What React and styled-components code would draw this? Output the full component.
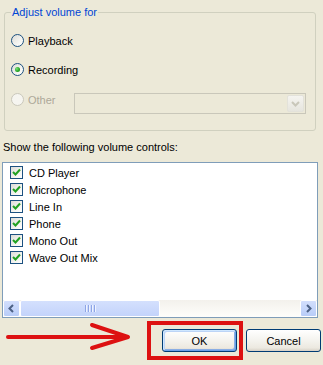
import React from "react";
import styled, { createGlobalStyle } from "styled-components";

const GlobalStyle = createGlobalStyle`
  html, body {
    margin: 0;
    padding: 0;
    background: #ece9d8;
  }
  body {
    font-family: "Liberation Sans", Arial, sans-serif;
    font-size: 11px;
  }
`;

const Dialog = styled.div`
  width: 323px;
  height: 365px;
  box-sizing: border-box;
  overflow: hidden;
  background: #ece9d8;
  color: #000;
  padding-top: 6px;
  display: flex;
  flex-direction: column;
`;

const Group = styled.fieldset`
  margin: 0 7px 0 4px;
  padding: 0 0 20px 6px;
  border: 1px solid #d0d0bf;
  border-radius: 3px;
  min-width: 0;
`;

const Legend = styled.legend`
  color: #0046d5;
  padding: 0 1px;
  line-height: 13px;
`;

const RadioList = styled.div`
  display: flex;
  flex-direction: column;
  gap: 8px;
  margin-top: 11px;
`;

const RadioRow = styled.div`
  display: flex;
  align-items: center;
  height: 21px;
  gap: 4px;
  margin-top: ${(p) => (p.$shift ? p.$shift : 0)}px;
  color: ${(p) => (p.$disabled ? "#aca899" : "#000")};
`;

const RadioDot = styled.span`
  width: 13px;
  height: 13px;
  box-sizing: border-box;
  border-radius: 50%;
  flex: none;
  display: flex;
  align-items: center;
  justify-content: center;
  border: 1px solid ${(p) => (p.$disabled ? "#cac8bb" : "#1c5180")};
  background: ${(p) =>
    p.$disabled
      ? "#f6f5f0"
      : "linear-gradient(135deg, #dcdcd7 0%, #f4f4f0 60%, #ffffff 100%)"};

  &::after {
    content: "";
    display: ${(p) => (p.$checked ? "block" : "none")};
    width: 5px;
    height: 5px;
    border-radius: 50%;
    background: radial-gradient(circle at 35% 35%, #7be37b 0%, #21a121 60%, #1a8a1a 100%);
  }
`;

const Combo = styled.div`
  margin-left: auto;
  margin-right: 9px;
  margin-top: 7px;
  width: 232px;
  height: 21px;
  box-sizing: border-box;
  border: 1px solid #c9c7ba;
  background: #ece9d8;
  display: flex;
  justify-content: flex-end;
  align-items: center;
  padding-right: 1px;
  flex: none;
`;

const ComboButton = styled.span`
  width: 17px;
  height: 17px;
  box-sizing: border-box;
  border: 1px solid #e3e2da;
  border-radius: 2px;
  background: linear-gradient(#f5f4f0, #e6e5de);
  display: flex;
  align-items: center;
  justify-content: center;
`;

const Caption = styled.div`
  margin: 10px 0 0 3px;
  line-height: 13px;
`;

const ListBox = styled.div`
  margin: 8px 5px 0 2px;
  height: 156px;
  box-sizing: border-box;
  border: 1px solid #7f9db9;
  background: #fff;
  display: flex;
  flex-direction: column;
`;

const Items = styled.div`
  flex: 1;
  padding: 1px 0 0 7px;
`;

const ItemRow = styled.div`
  display: flex;
  align-items: center;
  height: 17px;
  gap: 6px;
`;

const CheckBox = styled.span`
  width: 13px;
  height: 13px;
  box-sizing: border-box;
  flex: none;
  border: 1px solid #1c5180;
  background: linear-gradient(135deg, #dcdcd7 0%, #f4f4f0 60%, #ffffff 100%);
  display: flex;
  align-items: center;
  justify-content: center;
`;

const ScrollBar = styled.div`
  height: 17px;
  display: flex;
  background: linear-gradient(#f3f1ec, #fefefb);
`;

const ScrollButton = styled.span`
  width: 17px;
  height: 17px;
  box-sizing: border-box;
  flex: none;
  border: 1px solid #fff;
  border-radius: 2px;
  background: linear-gradient(#d2defc, #b9cdf8);
  display: flex;
  align-items: center;
  justify-content: center;
`;

const Track = styled.div`
  flex: 1;
  display: flex;
`;

const Thumb = styled.span`
  width: 140px;
  height: 17px;
  box-sizing: border-box;
  border: 1px solid #fff;
  border-radius: 2px;
  background: linear-gradient(#d4e0fd, #c3d3fb);
  display: flex;
  align-items: center;
  justify-content: center;
  gap: 1px;
`;

const Grip = styled.span`
  width: 1px;
  height: 7px;
  background: #8ea5e6;
  box-shadow: 1px 0 0 #eef3ff;
  margin-right: 1px;
`;

const Footer = styled.div`
  margin-top: 3px;
  height: 39px;
  display: flex;
  align-items: center;
`;

const Highlight = styled.div`
  border: 4px solid #dd1111;
  padding: 4px 2px 4px 11px;
  display: flex;
`;

const Button = styled.button`
  width: 75px;
  height: 23px;
  box-sizing: border-box;
  margin: 0 0 0 ${(p) => p.$gap || 0}px;
  padding: 0;
  font-family: "Liberation Sans", Arial, sans-serif;
  font-size: 11px;
  color: #000;
  border: 1px solid #003c74;
  border-radius: 3px;
  background: linear-gradient(#ffffff 0%, #f4f3ee 50%, #ece9e0 85%, #d6d0c5 100%);
  box-shadow: ${(p) =>
    p.$default
      ? "inset 1px 1px 0 #cee7ff, inset -1px -1px 0 #69a0e8, inset 2px 2px 0 #bcd4f6, inset -2px -2px 0 #89ade4"
      : "none"};
`;

const radios = [
  { label: "Playback", checked: false },
  { label: "Recording", checked: true },
];

const controls = ["CD Player", "Microphone", "Line In", "Phone", "Mono Out", "Wave Out Mix"];

const Chevron = ({ dir, color }) => (
  <svg width="9" height="9" viewBox="0 0 9 9">
    <polyline
      points={dir === "left" ? "6,1 2.5,4.5 6,8" : dir === "right" ? "3,1 6.5,4.5 3,8" : "1,3 4.5,6.5 8,3"}
      fill="none"
      stroke={color}
      strokeWidth="2"
    />
  </svg>
);

const Check = () => (
  <svg width="9" height="9" viewBox="0 0 9 9">
    <polyline points="1,4 3.5,6.5 8,1.5" fill="none" stroke="#21a121" strokeWidth="2" />
  </svg>
);

const Arrow = () => (
  <svg width="147" height="39" viewBox="0 0 147 39">
    <g fill="none" stroke="#dd1111" strokeWidth="4" strokeLinecap="round" strokeLinejoin="round">
      <line x1="8" y1="16" x2="125" y2="16" />
      <polyline points="92,4 128,16 92,27" />
    </g>
  </svg>
);

const App = () => {
  return (
    <Dialog>
      <GlobalStyle />
      <Group>
        <Legend>Adjust volume for</Legend>
        <RadioList>
          {radios.map((r) => (
            <RadioRow key={r.label}>
              <RadioDot $checked={r.checked} />
              {r.label}
            </RadioRow>
          ))}
          <RadioRow $disabled $shift={1}>
            <RadioDot $disabled />
            Other
            <Combo>
              <ComboButton>
                <Chevron dir="down" color="#c9c7ba" />
              </ComboButton>
            </Combo>
          </RadioRow>
        </RadioList>
      </Group>

      <Caption>Show the following volume controls:</Caption>

      <ListBox>
        <Items>
          {controls.map((c) => (
            <ItemRow key={c}>
              <CheckBox>
                <Check />
              </CheckBox>
              {c}
            </ItemRow>
          ))}
        </Items>
        <ScrollBar>
          <ScrollButton>
            <Chevron dir="left" color="#4d6185" />
          </ScrollButton>
          <Track>
            <Thumb>
              <Grip />
              <Grip />
              <Grip />
              <Grip />
            </Thumb>
          </Track>
          <ScrollButton>
            <Chevron dir="right" color="#4d6185" />
          </ScrollButton>
        </ScrollBar>
      </ListBox>

      <Footer>
        <Arrow />
        <Highlight>
          <Button $default>OK</Button>
        </Highlight>
        <Button $gap={3}>Cancel</Button>
      </Footer>
    </Dialog>
  );
};

export default App;
